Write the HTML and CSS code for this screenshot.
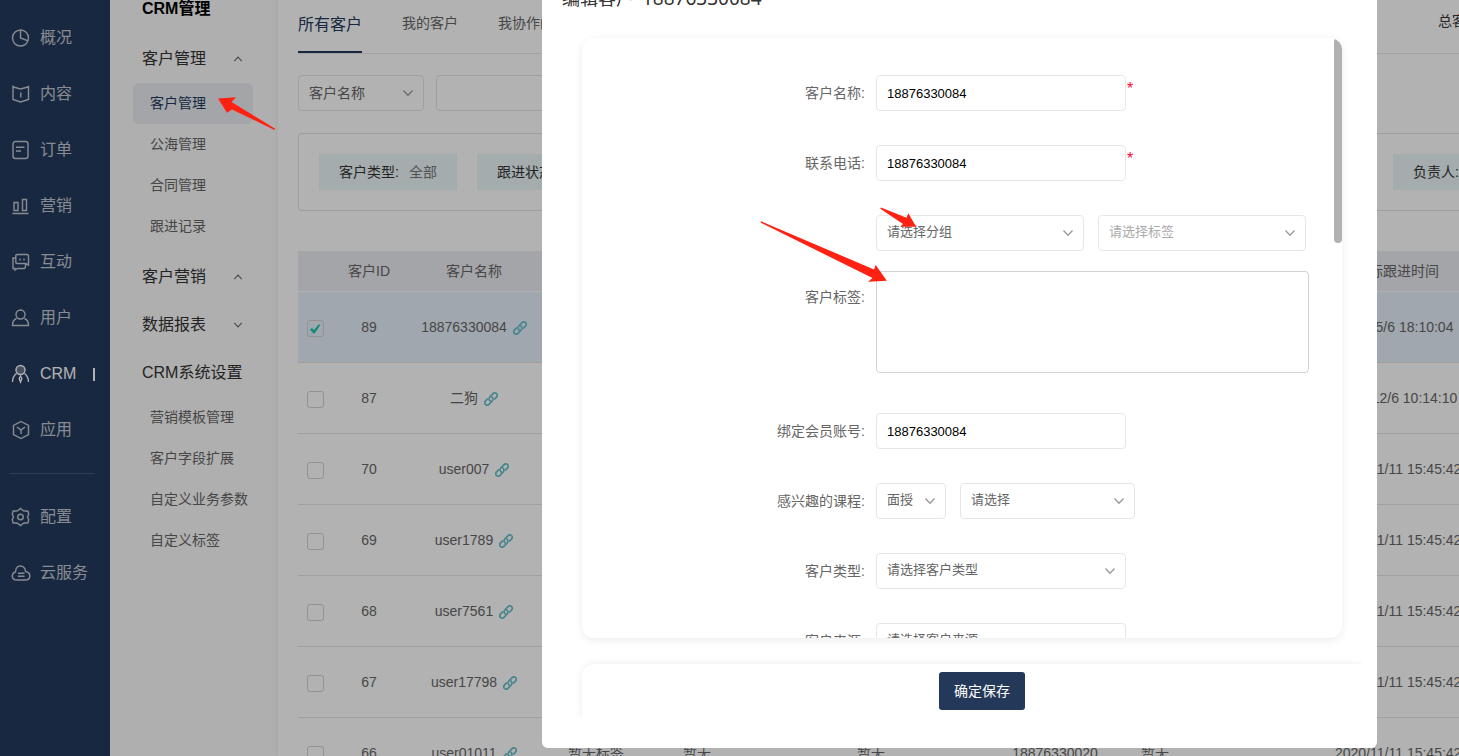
FILE: index.html
```html
<!DOCTYPE html>
<html lang="zh-CN">
<head>
<meta charset="utf-8">
<title>CRM管理</title>
<link rel="stylesheet" href="styles.css">
</head>
<body>
<svg class="symbols" aria-hidden="true">
  <symbol id="down" viewBox="0 0 12 12"><path d="M1.500 3.500 6 8.300l4.500-4.800" fill="none" stroke="currentColor" stroke-width="1.300"/></symbol>
  <symbol id="up" viewBox="0 0 12 12"><path d="M1.500 8.500 6 3.700l4.500 4.800" fill="none" stroke="currentColor" stroke-width="1.300"/></symbol>
  <symbol id="link" viewBox="1 1 14 14"><g fill="none" stroke="currentColor" stroke-width="1.700" stroke-linecap="round"><path d="M7.300 10C5.800 9.200 5.700 7.400 6.800 6l3-3.200c1.200-1.200 2.800-1.200 3.700-.300s.900 2.500-.1 3.600l-1.700 1.900"/><path d="M8.700 6c1.500.8 1.600 2.600.5 4l-3 3.200c-1.200 1.200-2.800 1.200-3.700.3s-.9-2.500.1-3.600L4.300 8"/></g></symbol>
</svg>

<div class="app">
  <nav class="rail">
    <a class="rail-item" href="#"><svg viewBox="0 0 20 20"><circle cx="9.500" cy="10" r="8"/><path d="M9.500 2v8l7.500 2.800"/></svg>概况</a>
    <a class="rail-item" href="#"><svg viewBox="0 0 20 20"><path d="M2 2.500l2 1 5.500 1.500L15 3.500l2.500-1v13l-8 2.500L2 15.500zM9.800 8.500v5"/></svg>内容</a>
    <a class="rail-item" href="#"><svg viewBox="0 0 20 20"><rect x="2" y="1.500" width="15" height="17" rx="2.500"/><path d="M5 7.200h8.500M5 11h5"/></svg>订单</a>
    <a class="rail-item" href="#"><svg viewBox="0 0 20 20"><path d="M1.500 17.500h16M3 6.500h4v8H3zM11.500 3.500h4v11h-4z"/></svg>营销</a>
    <a class="rail-item" href="#"><svg viewBox="0 0 20 20"><path d="M6 2.500h10c1 0 1.500.5 1.500 1.500v9l-3-1.500H6c-.8 0-1.200-.4-1.200-1.200V3.700c0-.8.4-1.200 1.200-1.200zM4.500 6H2v10.500h2v1.500l2.500-1.500h7l1-1.500v-3M9 6.500v2M13 6.500v2"/></svg>互动</a>
    <a class="rail-item" href="#"><svg viewBox="0 0 20 20"><circle cx="9.500" cy="6.500" r="4.500"/><path d="M5.500 10.500C3 11.500 1.500 13.500 1.500 17.500h16c0-4-1.500-6-4-7"/></svg>用户</a>
    <a class="rail-item current" href="#"><svg viewBox="0 0 20 20"><circle cx="9.500" cy="6" r="4.500" fill="#fff" fill-opacity=".3"/><path d="M5.500 9.500C3 11.500 1.500 13.500 1.500 18M13.500 9.500c2.500 2 4 4 4 8.500M9.500 12l1.300 2.500-1.300 3.500-1.300-3.500z"/></svg>CRM</a>
    <a class="rail-item" href="#"><svg viewBox="0 0 20 20"><path d="M10 1.500l7.500 4v9L10 18.500l-7.500-4v-9zM6 7l4 3 4-3M10 10v4"/></svg>应用</a>
    <hr class="rail-line">
    <a class="rail-item" href="#"><svg viewBox="0 0 20 20"><path d="M9.500 1.500l3 2.300 4.500.4.700 3.300-1.200 2.500 1.200 2.500-.7 3.300-4.500.4-3 2.300-3-2.300-4.500-.4-.7-3.300L2.500 10 1.300 7.500 2 4.200l4.500-.4z"/><circle cx="9.500" cy="10" r="2.800"/></svg>配置</a>
    <a class="rail-item" href="#"><svg viewBox="0 0 20 20"><path d="M6 17c-6 0-6-6.500-1.500-8C4.500 1 14 1 14.500 8.500 20.500 9.500 20 17 14.500 17zM7 10.200h6.500M7 13.200h6.500"/></svg>云服务</a>
  </nav>

  <nav class="menu">
    <h1 class="menu-title">CRM管理</h1>
    <button class="menu-group" type="button">客户管理<svg><use href="#up"/></svg></button>
    <div class="menu-list">
      <a class="active" href="#">客户管理</a>
      <a href="#">公海管理</a>
      <a href="#">合同管理</a>
      <a href="#">跟进记录</a>
    </div>
    <button class="menu-group" type="button">客户营销<svg><use href="#up"/></svg></button>
    <button class="menu-group" type="button">数据报表<svg><use href="#down"/></svg></button>
    <button class="menu-group" type="button">CRM系统设置</button>
    <div class="menu-list">
      <a href="#">营销模板管理</a>
      <a href="#">客户字段扩展</a>
      <a href="#">自定义业务参数</a>
      <a href="#">自定义标签</a>
    </div>
  </nav>

  <main class="main">
    <div class="tabs">
      <a class="tab on" href="#">所有客户</a>
      <a class="tab" href="#">我的客户</a>
      <a class="tab" href="#">我协作的</a>
      <span class="total">总客户</span>
    </div>
    <div class="search">
      <span class="pick search-by"><select aria-label="搜索字段"><option>客户名称</option></select><svg><use href="#down"/></svg></span>
      <input class="field" type="text" aria-label="关键词">
    </div>
    <div class="filters">
      <span class="chip">客户类型:<em>全部</em></span>
      <span class="chip">跟进状态</span>
      <span class="chip last">负责人:</span>
    </div>
    <table class="grid">
      <colgroup><col class="c-check"><col class="c-id"><col class="c-name"><col class="c-tag"><col class="c-level"><col><col class="c-phone"><col class="c-state"><col class="c-plan"><col class="c-time"></colgroup>
      <thead>
        <tr><th></th><th>客户ID</th><th>客户名称</th><th></th><th></th><th></th><th></th><th></th><th></th><th>实际跟进时间</th></tr>
      </thead>
      <tbody>
        <tr class="picked"><td><input type="checkbox" aria-label="选择 89" checked></td><td>89</td><td>18876330084<svg><use href="#link"/></svg></td><td></td><td></td><td></td><td></td><td></td><td></td><td>2021/5/6 18:10:04</td></tr>
        <tr><td><input type="checkbox" aria-label="选择 87"></td><td>87</td><td>二狗<svg><use href="#link"/></svg></td><td></td><td></td><td></td><td></td><td></td><td></td><td>2020/12/6 10:14:10</td></tr>
        <tr><td><input type="checkbox" aria-label="选择 70"></td><td>70</td><td>user007<svg><use href="#link"/></svg></td><td></td><td></td><td></td><td></td><td></td><td></td><td>2020/11/11 15:45:42</td></tr>
        <tr><td><input type="checkbox" aria-label="选择 69"></td><td>69</td><td>user1789<svg><use href="#link"/></svg></td><td></td><td></td><td></td><td></td><td></td><td></td><td>2020/11/11 15:45:42</td></tr>
        <tr><td><input type="checkbox" aria-label="选择 68"></td><td>68</td><td>user7561<svg><use href="#link"/></svg></td><td></td><td></td><td></td><td></td><td></td><td></td><td>2020/11/11 15:45:42</td></tr>
        <tr><td><input type="checkbox" aria-label="选择 67"></td><td>67</td><td>user17798<svg><use href="#link"/></svg></td><td></td><td></td><td></td><td></td><td></td><td></td><td>2020/11/11 15:45:42</td></tr>
        <tr><td><input type="checkbox" aria-label="选择 66"></td><td>66</td><td>user01011<svg><use href="#link"/></svg></td><td>暂无标签</td><td>暂无</td><td>暂无</td><td>18876330020</td><td>暂无</td><td></td><td>2020/11/11 15:45:42</td></tr>
      </tbody>
    </table>
  </main>
</div>

<div class="mask">
  <section class="dialog" role="dialog" aria-labelledby="dialog-title">
    <h2 class="dialog-title" id="dialog-title">编辑客户<span>18876330084</span></h2>
    <div class="panel">
      <form class="form">
        <label for="name">客户名称:</label>
        <div class="line"><input class="field mid" id="name" type="text" value="18876330084"><span class="must">*</span></div>
        <label for="phone">联系电话:</label>
        <div class="line"><input class="field mid" id="phone" type="text" value="18876330084"><span class="must">*</span></div>
        <label class="tag-label" for="tags">客户标签:</label>
        <div class="tag-block">
          <div class="line spaced">
            <span class="pick half"><select aria-label="分组"><option>请选择分组</option></select><svg><use href="#down"/></svg></span>
            <span class="pick half"><select class="faint" aria-label="标签"><option>请选择标签</option></select><svg><use href="#down"/></svg></span>
          </div>
          <textarea id="tags"></textarea>
        </div>
        <label for="account">绑定会员账号:</label>
        <div class="line"><input class="field mid" id="account" type="text" value="18876330084"></div>
        <label for="course">感兴趣的课程:</label>
        <div class="line spaced">
          <span class="pick tiny"><select id="course"><option>面授</option></select><svg><use href="#down"/></svg></span>
          <span class="pick small"><select aria-label="课程"><option>请选择</option></select><svg><use href="#down"/></svg></span>
        </div>
        <label for="kind">客户类型:</label>
        <div class="line"><span class="pick mid"><select id="kind"><option>请选择客户类型</option></select><svg><use href="#down"/></svg></span></div>
        <label for="source">客户来源:</label>
        <div class="line"><span class="pick mid"><select id="source"><option>请选择客户来源</option></select><svg><use href="#down"/></svg></span></div>
      </form>
      <div class="thumb"></div>
    </div>
    <div class="actions"><button class="save" type="button">确定保存</button></div>
  </section>
</div>

<svg class="arrows" width="1459" height="756" viewBox="0 0 1459 756" aria-hidden="true">
  <path d="M218 98.500 236 97.300 231.500 102 275.200 128.800 274.500 130 232 109.500 227 112.800z"/>
  <path d="M761 221.200 874 269.500 875.700 265 886.800 280.700 868 281.800 872.500 278 760.500 222.600z"/>
  <path d="M881 207.500 906.500 217.800 908.300 213.300 916.200 226.700 900.500 226.700 903 224 880.300 208.800z"/>
</svg>
</body>
</html>
```

FILE: styles.css
```css
* { box-sizing: border-box; }

body {
  margin: 0;
  height: 100vh;
  overflow: hidden;
  background: #fff;
  color: #666;
  font: 14px/20px "Liberation Sans", "Noto Sans CJK SC", sans-serif;
}

a { color: inherit; text-decoration: none; }

button, input, select, textarea { font: inherit; color: inherit; }

.symbols { display: none; }

.app { display: flex; height: 100vh; overflow: hidden; }

/* Primary navigation */
.rail {
  flex: 0 0 110px;
  padding-top: 10px;
  background: #243a5d;
  color: #c3c9d1;
  font-size: 16px;
}

.rail-item {
  position: relative;
  display: flex;
  align-items: center;
  gap: 9px;
  height: 56px;
  padding-left: 11px;
}

.rail-item svg {
  width: 20px;
  height: 20px;
  fill: none;
  stroke: currentColor;
  stroke-width: 1.4;
}

.rail-item.current { color: #fff; }

.rail-item.current::after {
  content: "";
  position: absolute;
  right: 15px;
  width: 2px;
  height: 13px;
  background: #fff;
}

.rail-line {
  height: 1px;
  margin: 15px 15px 15px 9px;
  border: 0;
  background: #465873;
}

/* Secondary navigation */
.menu {
  flex: 0 0 168px;
  padding: 1px 0 0 23px;
  background: #fbfbfb;
}

.menu-title {
  margin: 0 0 18px;
  padding-left: 9px;
  color: #000;
  font-size: 16px;
  line-height: 16px;
}

.menu-group {
  display: flex;
  align-items: center;
  justify-content: space-between;
  width: 120px;
  height: 48px;
  padding: 0 10px 0 9px;
  border: 0;
  background: none;
  color: #333;
  font-size: 16px;
  text-align: left;
  white-space: nowrap;
}

.menu-group svg { width: 10px; height: 10px; color: #666; }

.menu-list { margin-bottom: 6px; }

.menu-list a {
  display: block;
  width: 120px;
  padding-left: 17px;
  border-radius: 6px;
  line-height: 41px;
  white-space: nowrap;
}

.menu-list .active { background: #ebecf1; color: #243a5d; }

/* Customer list */
.main {
  flex: 1;
  min-width: 0;
  overflow: hidden;
  padding-left: 20px;
  box-shadow: -1px 0 4px rgba(0, 40, 30, .06);
}

.tabs {
  display: flex;
  gap: 40px;
  height: 54px;
  border-bottom: 1px solid #e8e8e8;
  white-space: nowrap;
}

.tab { padding-top: 13px; }

.tab.on {
  height: 53px;
  padding-top: 15px;
  border-bottom: 2px solid #243a5d;
  color: #243a5d;
  font-size: 16px;
}

.total {
  width: 21px;
  margin-left: auto;
  padding-top: 11px;
  color: #333;
}

.search { display: flex; gap: 12px; margin: 21px 0 22px; }

.search-by { width: 126px; }

.field, .pick select {
  height: 36px;
  padding: 0 10px;
  border: 1px solid #e6e6e6;
  border-radius: 4px;
  background: transparent;
  outline: 0;
}

.search .field { width: 300px; }

.pick { position: relative; display: inline-flex; }

.pick select { width: 100%; appearance: none; }

.pick svg {
  position: absolute;
  top: 12px;
  right: 10px;
  width: 12px;
  height: 12px;
  color: #999;
  pointer-events: none;
}

.filters {
  display: flex;
  gap: 20px;
  padding: 20px 0 20px 20px;
  border: 1px solid #dce6e4;
  border-right: 0;
  border-radius: 4px 0 0 4px;
  white-space: nowrap;
}

.chip {
  padding: 0 20px;
  background: #ebf6f8;
  color: #333;
  line-height: 36px;
}

.chip em { margin-left: 10px; color: #777; font-style: normal; }

.chip.last { width: 66px; margin-left: auto; }

.grid {
  width: 100%;
  margin-top: 40px;
  border-collapse: separate;
  border-spacing: 0;
  table-layout: fixed;
}

.c-check { width: 35px; }
.c-id { width: 72px; }
.c-name { width: 138px; }
.c-tag { width: 106px; }
.c-level { width: 96px; }
.c-phone { width: 116px; }
.c-state { width: 84px; }
.c-plan { width: 138px; }
.c-time { width: 124px; }

.grid th, .grid td {
  padding: 0;
  border-bottom: 1px solid #e6e6e6;
  text-align: center;
  white-space: nowrap;
}

.grid th {
  height: 41px;
  border-color: #fff;
  background: #ebecf1;
  font-weight: 400;
}

.grid td { height: 71px; }

.grid .picked td { background: #e6f0fa; }

.grid td svg {
  width: 14px;
  height: 14px;
  margin-left: 6px;
  color: #68bfc9;
  vertical-align: -3px;
}

.grid input {
  width: 17px;
  height: 17px;
  margin: 2px 0 0;
  border: 1px solid #d2d2d2;
  border-radius: 3px;
  appearance: none;
  vertical-align: middle;
}

.grid input:checked::after {
  content: "";
  display: block;
  width: 11px;
  height: 11px;
  margin: 2px;
  background: #16c8ae;
  clip-path: polygon(0 55%, 18% 42%, 36% 60%, 78% 10%, 95% 12%, 42% 92%, 30% 92%);
}

/* Edit dialog */
.mask {
  position: fixed;
  inset: 0;
  display: flex;
  justify-content: flex-end;
  align-items: flex-start;
  padding-right: 82px;
  background: rgba(0, 0, 0, .3);
}

.dialog {
  width: 835px;
  margin-top: -33px;
  padding: 19px 15px 31px 20px;
  border-radius: 6px;
  background: #fff;
}

.dialog-title {
  margin: 0 0 27px;
  color: #333;
  font-size: 18px;
  font-weight: 400;
  line-height: 24px;
}

.dialog-title span {
  margin-left: 8px;
  font-family: "Noto Sans", sans-serif;
  font-size: 19px;
}

.panel {
  position: relative;
  height: 600px;
  margin: 0 20px 26px;
  overflow: hidden;
  border-radius: 12px;
  box-shadow: 0 2px 8px rgba(0, 0, 0, .08);
}

.form {
  display: grid;
  grid-template-columns: 283px 1fr;
  gap: 34px 11px;
  padding-top: 37px;
}

.form label { line-height: 36px; text-align: right; }

.form .tag-label { padding-top: 64px; }

.line { display: flex; }

.spaced { gap: 14px; }

.line .field { color: #000; font-size: 13px; }

.line select { padding-bottom: 2px; font-size: 13px; }

.line .faint { color: #aaa; }

.mid { width: 250px; }
.half { width: 208px; }
.small { width: 175px; }
.tiny { width: 70px; }

.must { margin-left: 1px; padding-top: 4px; color: #f03; font-size: 16px; }

.tag-block { margin-bottom: 6px; }

.form textarea {
  display: block;
  width: 433px;
  height: 102px;
  margin-top: 20px;
  border: 1px solid #d2d2d2;
  border-radius: 4px;
  outline: 0;
  resize: none;
}

.thumb {
  position: absolute;
  top: 0;
  right: 0;
  width: 8px;
  height: 205px;
  border-radius: 4px;
  background: #b1b1b1;
}

.actions {
  display: flex;
  justify-content: center;
  margin-left: 20px;
  padding: 8px 0 7px 20px;
  border-radius: 12px 0 0;
  box-shadow: 0 0 8px rgba(0, 0, 0, .08);
  clip-path: inset(-10px 0 0 -10px);
}

.save {
  height: 38px;
  padding: 0 15px;
  border: 0;
  border-radius: 3px;
  background: #24385a;
  color: #fff;
}

.arrows {
  position: absolute;
  top: 0;
  left: 0;
  fill: #ff2213;
  pointer-events: none;
}
```
